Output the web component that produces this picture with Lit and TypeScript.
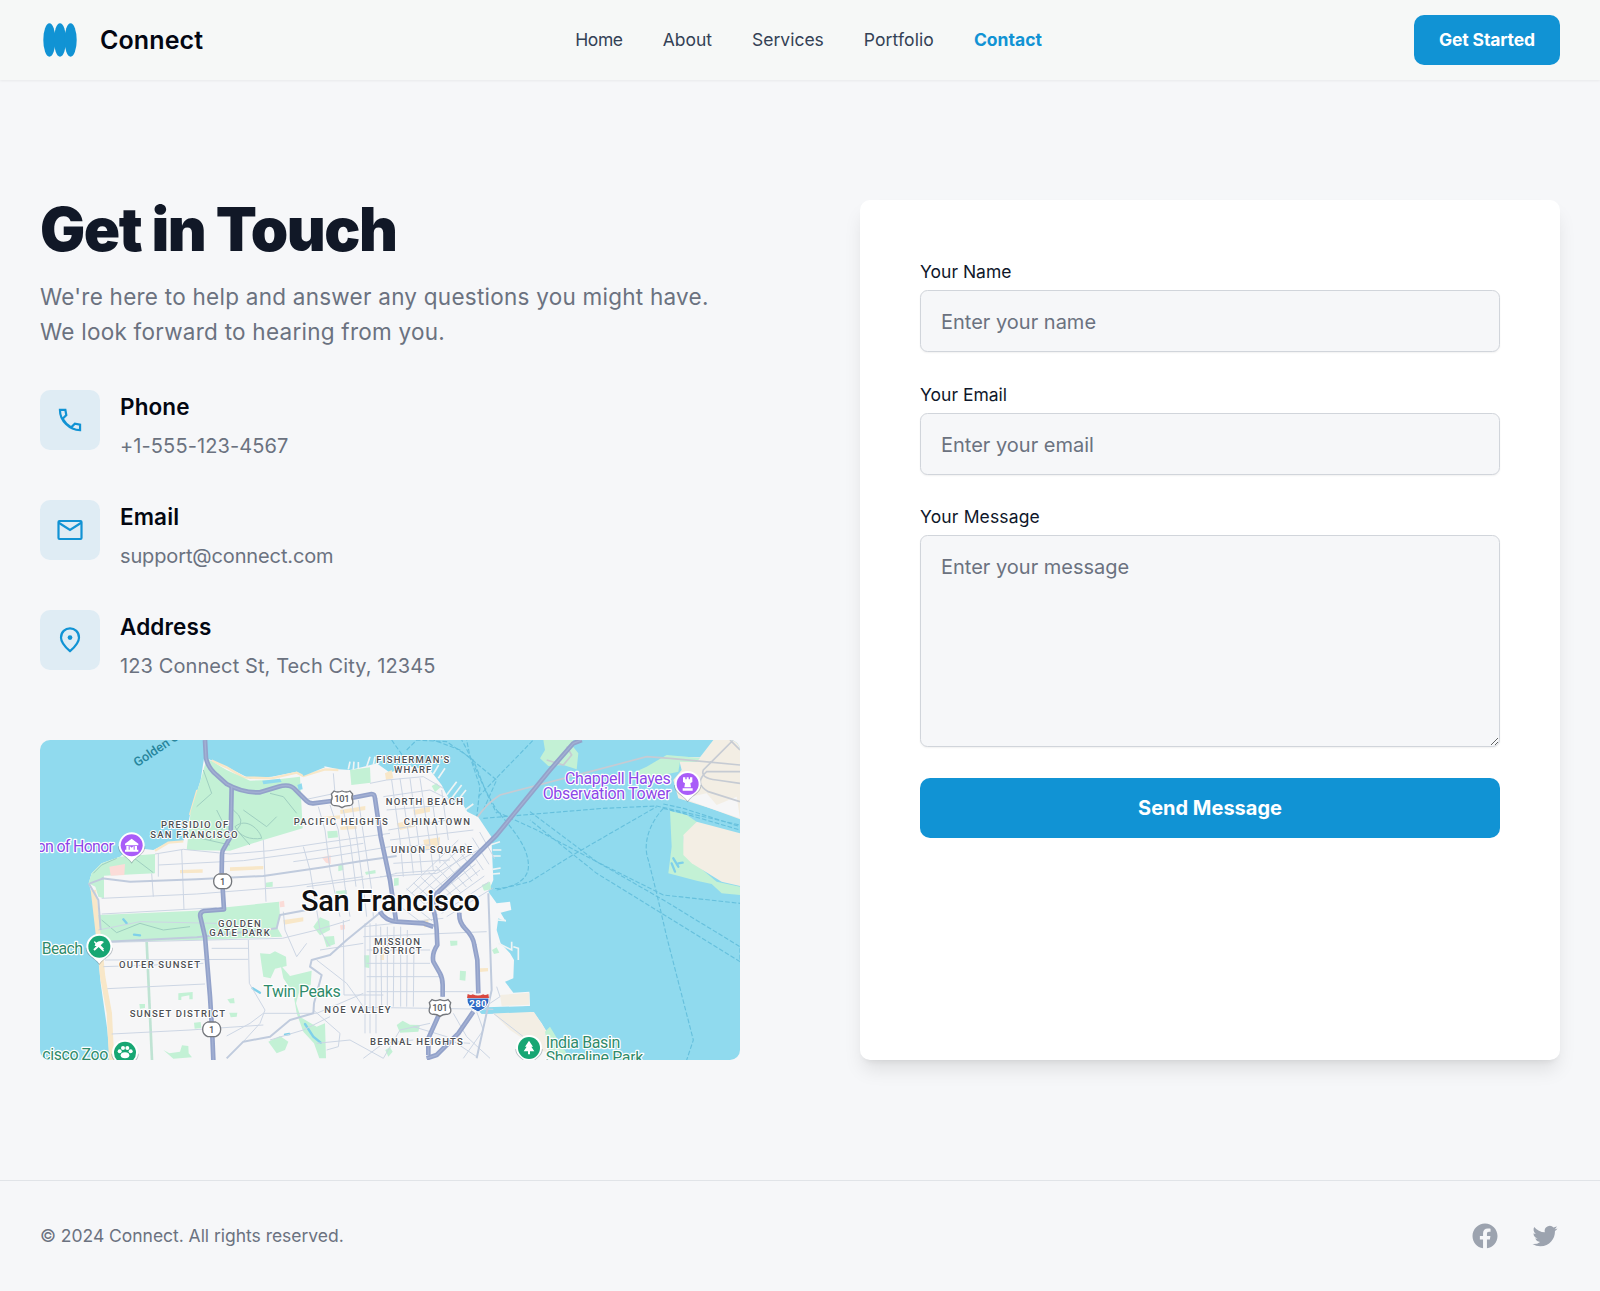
import { LitElement, html, svg, css, unsafeCSS } from "lit";
import { customElement } from "lit/decorators.js";

/* ---------- Map of San Francisco ---------- */

const WATER = unsafeCSS("#90daee");
const LAND = unsafeCSS("#f6f6f7");
const PARK = unsafeCSS("#c3f1d5");
const SAND = unsafeCSS("#f8e7c8");
const URBAN = unsafeCSS("#f3eee4");
const HIGHWAY = unsafeCSS("#93a2ca");

const sfLand =
  "M525 30L530 85L590 110L660 146L725 140L800 125L820 138L880 108L925 118L960 120L1010 108L1040 100L1080 128L1130 108L1200 120L1235 165L1258 210L1300 225L1312 245L1345 262L1384 320L1390 450L1375 485L1400 520L1440 515L1444 540L1412 548L1428 575L1405 565L1400 600L1412 640L1440 670L1452 690L1450 745L1425 755L1450 788L1498 785L1500 828L1370 845L1360 852L1510 846L1535 880L1560 925L1600 990L240 990L232 900L212 760L200 620L188 500L176 460L185 430L215 400L270 380L300 352L370 360L410 340L460 332L470 300L482 245L512 150L522 85Z";

const parks = [
  "M530 85L590 120L660 152L725 150L810 140L818 295L700 330L600 362L470 360L482 245L512 150Z",
  "M185 430L215 400L270 380L375 372V430L222 437L222 505L205 500L196 470L176 460Z",
  "M205 555L500 542L560 535L747 515L750 560L740 590L757 620L500 630L215 636Z",
  "M960 120L1020 112L1022 158L964 165Z",
  "M690 670L720 672L735 664L768 680L770 708L735 716L722 745L700 740L694 700Z",
  "M850 590L870 562L898 574L900 600L870 616Z",
  "M880 620L912 618L915 642L890 652Z",
  "M752 706L780 738L845 722L842 765L810 776L798 820L812 862L860 890L885 880L888 985L868 985L852 940L820 905L800 850L790 790L760 745Z",
  "M715 935L750 918L775 935L765 960L740 970Z",
  "M400 960L418 970L450 965L456 946L475 948L476 970L486 982L430 986Z",
  "M445 790L488 786V808L478 808V796L454 800V810L445 810Z",
  "M592 808L612 804L614 820L600 820Z",
  "M598 848L622 848L620 860L602 862Z",
  "M492 878L512 876L514 894L494 896Z",
  "M328 822L345 822V834L330 836Z",
  "M892 304L922 302L924 322L894 325Z",
  "M925 404L940 402V420L925 424Z",
  "M1005 426L1036 420L1037 430L1008 434Z",
  "M707 458L728 455V470L708 472Z",
  "M1002 676L1018 676V714L1004 712Z",
  "M918 484L950 480V494L920 500Z",
  "M1260 632L1282 632V646L1262 648Z",
  "M1290 722L1308 724L1306 752L1289 750Z",
  "M1100 885L1118 872L1140 884L1170 885L1165 905L1110 908Z",
  "M1066 960L1080 952L1088 965L1075 980Z",
  "M1205 168L1220 160L1232 172L1215 186Z",
  "M1092 445L1106 443V466L1092 468Z",
  "M1355 465L1380 455L1384 478L1362 482Z",
  "M1386 660L1400 652L1408 668L1392 672Z",
  "M1545 905L1560 890L1590 940L1620 985L1560 985Z",
];

const blocks = [
  "M450 420L518 418V428L450 430Z",
  "M600 412L700 408V418L600 423Z",
  "M930 240L1006 228V240L932 252Z",
  "M880 260L930 256V266L880 270Z",
  "M930 290L980 285V297L932 300Z",
  "M1180 330L1230 322L1228 350L1185 360Z",
  "M1100 280L1150 270L1155 290L1110 300Z",
  "M1150 240L1200 230V245L1152 255Z",
  "M1065 130L1085 120L1090 145L1068 150Z",
  "M760 570L820 562V574L762 584Z",
  "M1350 715L1374 714V724L1350 726Z",
  "M1180 570L1195 568V590L1182 592Z",
  "M1050 640L1062 640V690L1052 690Z",
];

const streets = [
  "M215 505L500 492L780 470L1000 440", "M215 552L560 533",
  "M385 405L640 392L840 365L1000 340", "M375 372L460 358L600 372L720 362L900 335L1080 310",
  "M385 440V372", "M365 430L370 500", "M455 360L462 540", "M700 330L708 515",
  "M235 637L757 625L860 600L960 570", "M225 690L655 688", "M220 710L520 700", "M232 776L525 762", "M245 912L480 900L700 885",
  "M590 918L660 880L700 850", "M545 655L655 655", "M655 630L658 760L705 840L690 880L640 935",
  "M760 545L765 600L800 680L830 640", "M820 350L840 420L870 600L900 650", "M865 230L885 300L900 420L930 560",
  "M900 225L925 300L945 470L960 560", "M940 240L960 330L978 470", "M965 215L1000 470L1010 560", "M985 210L1025 480L1030 560",
  "M830 470L1060 440L1100 430", "M790 395L900 380L1080 350L1200 345", "M910 130L915 190L820 210",
  "M1020 160L1070 150L1180 140L1240 175", "M1060 200L1200 180L1270 215", "M1070 240L1250 225", "M1075 300L1300 262", "M1080 330L1330 300",
  "M1085 370L1280 350", "M1090 400L1260 390", "M1095 430L1230 420", "M1050 440L1220 430L1380 340",
  "M1085 150L1110 330L1120 440", "M1110 145L1140 340L1150 430", "M1140 145L1165 330L1175 430", "M1170 145L1200 345L1210 420",
  "M1205 200L1225 340L1230 400", "M1235 180L1255 330",
  "M1000 590L1240 565", "M1000 620L1370 605", "M940 570L942 795L1060 795", "M1005 580V910", "M1020 580V910", "M1038 580V910",
  "M1052 590L1055 830", "M1072 590V830", "M1092 590L1090 830", "M1112 590V830", "M1132 600L1130 830", "M1152 640L1150 830",
  "M1010 660H1200", "M1010 700H1200", "M1010 740H1230", "M1010 785H1330", "M1010 832L1390 838",
  "M860 690L950 760L1000 830", "M870 660L1000 640", "M700 850L860 850L1000 790", "M850 840L930 910L925 950L890 960",
  "M1000 985L1060 940L1150 930", "M1150 890L1250 920L1340 980", "M1270 850L1310 920L1380 985", "M1170 930L1320 940",
  "M1340 845L1360 900L1300 985", "M1390 850L1480 920", "M1060 985L1110 900L1200 880", "M860 940L960 930L1060 985",
  "M1400 770L1410 800L1380 820", "M720 930L820 900L900 860", "M205 600L330 575L560 580",
];

const diagonalStreets = Array.from({ length: 13 }, (_, i) => `M${1085 + i * 22} ${510 - i * 17}L${1190 + i * 17} ${590 - i * 17}`).concat(
  Array.from({ length: 9 }, (_, i) => `M${1130 + i * 15} ${480 + i * 10}L${1285 + i * 13} ${330 + i * 18}`),
);

const arterials = [
  "M215 445L300 455L500 448L700 438L880 412L1000 392L1100 378",
  "M176 460L205 510L212 600", "M180 460L220 445",
  "M215 636L500 622L740 595L750 555L830 540",
  "M590 985L640 935L720 920L780 870L850 850L852 820L875 735L840 710L845 690L900 675L950 630L1060 540",
  "M1375 490L1385 780L1340 985",
];

const highways = [
  "M525 30L528 85Q535 115 560 135L590 162Q640 190 690 187L745 170Q780 160 795 178L830 213Q838 221 850 220L905 213M968 203L1025 192Q1034 192 1035 205L1052 320L1080 450L1098 572M1050 545Q1065 572 1100 575L1180 580L1210 590",
  "M605 170L602 320L582 355Q576 362 576 375L575 430M578 475L582 538L522 543Q508 546 511 560L525 620L540 800L545 880M547 918L550 990",
  "M1655 30L1630 40L1560 120L1400 315L1320 395L1220 490L1208 530Q1217 560 1220 600L1222 645Q1205 670 1210 695L1230 730Q1238 745 1238 765V800M1225 858L1195 925L1195 975",
  "M1288 548Q1286 575 1305 595Q1330 620 1333 645L1342 690L1345 790M1330 845L1285 910L1220 975L1190 985",
];

const ferries = [
  "M1375 475C1440 480 1490 455 1495 415C1500 350 1440 290 1400 240C1350 160 1330 90 1295 30",
  "M1360 265L1720 235L1880 228L2130 285", "M1400 245L1520 300L1700 395L1900 510L2130 650L2130 695L1700 430L1500 270",
  "M1400 480L1500 455L1620 380L1880 230", "M1900 235C1850 290 1840 350 1855 390L1880 490L1910 620L1990 930L1970 990",
  "M1500 245L1700 395L1900 495L2130 520", "M1340 265L1350 170L1320 80L1310 30", "M1345 200L1510 30", "M1360 240L1400 150L1290 60L1210 30",
  "M1130 60L1160 30L1250 35L1330 90L1370 190L1400 250", "M1085 30L1120 80",
];

type MapLabel = { t: string; x: number; y: number; w: number };

const districts: MapLabel[] = [
  { t: "PRESIDIO OF", x: 393, y: 294, w: 202 },
  { t: "SAN FRANCISCO", x: 361, y: 324, w: 262 },
  { t: "PACIFIC HEIGHTS", x: 791, y: 286, w: 282 },
  { t: "FISHERMAN'S", x: 1039, y: 99, w: 219 },
  { t: "WHARF", x: 1092, y: 129, w: 112 },
  { t: "NORTH BEACH", x: 1067, y: 224, w: 232 },
  { t: "CHINATOWN", x: 1121, y: 285, w: 199 },
  { t: "UNION SQUARE", x: 1083, y: 368, w: 243 },
  { t: "GOLDEN", x: 564, y: 590, w: 128 },
  { t: "GATE PARK", x: 538, y: 619, w: 181 },
  { t: "OUTER SUNSET", x: 267, y: 713, w: 243 },
  { t: "SUNSET DISTRICT", x: 299, y: 862, w: 286 },
  { t: "MISSION", x: 1033, y: 644, w: 137 },
  { t: "DISTRICT", x: 1028, y: 673, w: 147 },
  { t: "NOE VALLEY", x: 883, y: 850, w: 199 },
  { t: "BERNAL HEIGHTS", x: 1020, y: 944, w: 278 },
];

const paths = (list: string[], cls: string) => list.map((d) => svg`<path class=${cls} d=${d}></path>`);

const pin = (x: number, y: number, tone: string, glyph: unknown) => svg`
  <g transform="translate(${x} ${y})">
    <path class="pin-shadow" d="M-41 3C-41 28 -15 32 0 55C15 32 41 28 41 3Z"></path>
    <path class="pin-body" d="M0 -39A39 39 0 0 1 39 0C39 26 14 32 0 51C-14 32 -39 26 -39 0A39 39 0 0 1 0 -39Z"></path>
    <circle class=${tone} r="33"></circle>
    ${glyph}
  </g>`;

const usShield = (x: number, y: number) => svg`
  <g transform="translate(${x} ${y})">
    <path class="shield" d="M-24 -24Q-14 -18 0 -24Q14 -18 24 -24L32 -15Q27 -4 32 4Q35 18 22 20Q10 19 0 26Q-10 19 -22 20Q-35 18 -32 4Q-27 -4 -32 -15Z"></path>
    <text class="shield-num" x="0" y="10" textLength="46">101</text>
  </g>`;

const stateShield = (x: number, y: number) => svg`
  <g transform="translate(${x} ${y})">
    <path class="shield" d="M-12 -22H12Q27 -16 27 0Q27 16 12 22H-12Q-27 16 -27 0Q-27 -16 -12 -22Z"></path>
    <text class="shield-num" x="0" y="10">1</text>
  </g>`;

@customElement("city-map")
export class CityMap extends LitElement {
  static styles = css`
    :host { display: block; height: 320px; border-radius: 10px; overflow: hidden; background: ${WATER}; }
    svg { display: block; width: 100%; height: 100%; }
    path { fill: none; }
    .land { fill: ${LAND}; }
    .park { fill: ${PARK}; }
    .sand { fill: ${SAND}; }
    .urban { fill: ${URBAN}; }
    .blush { fill: #fbdcd8; }
    .water { fill: ${WATER}; }
    .beach { stroke: ${SAND}; stroke-width: 16; }
    .coast { stroke: ${SAND}; stroke-width: 7; }
    .pier { stroke: #eef4f4; stroke-width: 5; }
    .street { stroke: #cdd6e4; stroke-width: 3; }
    .trail { stroke: #9fcfc0; stroke-width: 3; }
    .greenway { stroke: #bfe3d3; stroke-width: 8; }
    .arterial { stroke: #c0cbdd; stroke-width: 6; stroke-linejoin: round; }
    .highway { stroke: ${HIGHWAY}; stroke-width: 14; stroke-linejoin: round; }
    .highway-core { stroke: #a3b0d3; stroke-width: 4; stroke-linejoin: round; }
    .ferry { stroke: #66c0dd; stroke-width: 3.4; stroke-dasharray: 14 6; }
    .ramp { stroke: #c6cbd3; stroke-width: 5; }
    .brook { stroke: #7fd0ea; stroke-width: 7; stroke-linecap: round; }
    text { font-family: Roboto, "Liberation Sans", sans-serif; paint-order: stroke; stroke-linejoin: round; }
    .district { font-size: 28.5px; font-weight: 500; fill: #4d4f53; stroke: #fff; stroke-width: 6px; }
    .city { font-size: 87px; font-weight: 500; fill: #101113; stroke: #fff; stroke-width: 8px; }
    .poi { font-size: 48px; stroke: #fff; stroke-width: 7px; }
    .green { fill: #2f8b6b; }
    .violet { fill: #8c47e8; }
    .strait { font-size: 38px; font-weight: 500; fill: #27859c; }
    .shield { fill: #fff; stroke: #74777c; stroke-width: 4; }
    .shield-num { font-size: 28px; font-weight: 500; fill: #55585c; text-anchor: middle; }
    .interstate { fill: #2e69c4; stroke: #fff; stroke-width: 3; }
    .interstate-top { fill: #d9483f; }
    .interstate-num { font-size: 29px; font-weight: 700; fill: #fff; text-anchor: middle; }
    .pin-shadow { fill: #5d6b78; opacity: 0.4; }
    .pin-body { fill: #fff; }
    .pin-violet { fill: #a95cf8; }
    .pin-green { fill: #17a673; }
    .glyph-line { stroke: #fff; stroke-width: 4; stroke-linecap: round; }
    .glyph { fill: #fff; }
  `;

  render() {
    return html`<svg viewBox="30 30 2100 960" preserveAspectRatio="none" role="img" aria-label="Map of San Francisco">
      ${paths(ferries, "ferry")}
      <path class="park" d="M1540 30L1545 60L1530 85L1555 108L1600 105L1640 118L1645 70L1625 45L1630 30Z"></path>
      <path class="ramp" d="M1550 90L1600 105L1625 75L1610 50"></path>
      <path class="urban" d="M2050 30L2010 82L1945 80L1955 120L1930 150L1945 205L2040 235L2130 268V30Z"></path>
      <path class="land" d="M1960 205L2030 190L2060 225L2120 200L2130 265L2040 235Z"></path>
      <path class="park" d="M1910 75L2010 84L2000 96L1950 95L1945 125L1900 135L1870 160L1825 150L1810 128L1850 110Z"></path>
      <path class="park" d="M1920 243L1970 255L2000 275L1960 320L1965 375L2060 455L2130 470V495L2075 490L2045 462L2000 452L1915 430L1925 350Z"></path>
      <path class="urban" d="M2000 275L2130 310V468L2075 455L1985 400L1960 375V315Z"></path>
      <path class="brook" d="M1930 385L1945 410M1925 400L1935 425M1945 400L1958 398"></path>
      <path class="ramp" d="M1340 265Q1370 220 1410 195L1680 125L1850 80L1920 85L2130 105M2130 125H2030Q1990 160 2035 185L2130 215M2130 60L2100 30M2130 160L2060 150Q2010 145 2020 120L2110 30"></path>
      <path class="ferry" d="M1900 222L1960 235L2130 290M1900 235L1960 250L2130 300"></path>

      <path class="land" d=${sfLand}></path>
      <path class="beach" d="M190 480L206 620L218 740L238 850L245 990"></path>
      <path class="coast" d="M545 92L590 112L640 142L725 145L800 128L820 138L885 118L925 120"></path>
      <path class="coast" d="M480 255L502 180M375 362L415 338L460 334"></path>
      <path class="urban" d="M1385 845L1512 846L1555 912L1600 985L1530 960L1440 900Z"></path>
      <path class="urban" d="M1410 795L1498 788V824L1415 828Z"></path>
      ${paths(parks, "park")} ${paths(blocks, "sand")}
      <path class="blush" d="M238 410L285 402L283 435L242 437ZM875 382L902 376L902 402L888 398ZM748 515L762 512L764 530L750 532ZM930 586L945 584V598L932 600Z"></path>
      <path class="pier" d="M1195 120L1210 95M1210 132L1226 105M1225 145L1245 115M1250 195L1280 155M1265 205L1295 165M1280 215L1308 180M1305 240L1330 222M1380 345L1410 335M1388 360L1414 360M1388 378L1412 378M1388 418L1412 414M1388 432L1410 430M1400 570L1428 572M1405 640L1445 660V635M1450 650L1465 655V690M1010 110L1020 80M1030 105L1035 80M955 118L960 95M970 118L972 95M985 116L985 96"></path>
      <path class="water" d="M1345 842L1370 832L1500 828V846L1355 852ZM815 125L880 105L885 112L820 138ZM697 152L750 146L755 156L700 163ZM802 165L815 160L818 178L806 180Z"></path>
      <path class="brook" d="M668 775L690 788M825 882L850 920L872 938M765 914L778 912M312 614L330 616M280 568L290 580"></path>
      <path class="trail" d="M520 120L545 190L500 230M560 240L585 290L540 330M610 240Q650 270 620 300L660 345M640 240L710 290L740 260M720 190L760 200L800 250M615 290C650 260 690 300 695 325C660 330 630 320 615 290M490 320L600 345M190 430L215 405L260 385M215 570L260 608L330 580L400 600L480 590M300 375L370 428"></path>
      <path class="greenway" d="M350 635L366 990"></path>
      ${paths(streets, "street")} ${paths(diagonalStreets, "street")}
      ${paths(arterials, "arterial")} ${paths(highways, "highway")} ${paths(highways, "highway-core")}

      ${usShield(936, 207)} ${usShield(1230, 833)} ${stateShield(578, 454)} ${stateShield(545, 898)}
      <g transform="translate(1344 818)">
        <path class="interstate" d="M-33 -14H33Q37 12 0 28Q-37 12 -33 -14Z"></path>
        <path class="interstate-top" d="M-31 -26Q-20 -20 -16 -25Q0 -18 16 -25Q20 -20 31 -26L33 -14H-33Z"></path>
        <text class="interstate-num" x="0" y="13" textLength="52">280</text>
      </g>

      ${pin(305, 346, "pin-violet", svg`<path class="glyph" d="M-20 -5L0 -20L20 -5V0H-20ZM-16 2H-9V13H-16ZM9 2H16V13H9ZM-20 13H20V19H-20ZM-6 2L0 7L6 2V13H-6Z"></path>`)}
      ${pin(1973, 162, "pin-violet", svg`<path class="glyph" d="M-14 -20H-7V-14H-3V-20H3V-14H7V-20H14V-6L8 -2L10 10H-10L-8 -2L-14 -6ZM-15 13H15V20H-15Z"></path>`)}
      ${pin(208, 650, "pin-green", svg`<path class="glyph" d="M-14 -2A18 18 0 0 1 14 -14L4 -4L14 6L10 10L-1 0L-14 12L-18 8L-8 -2Z"></path><path class="glyph-line" d="M-14 -14L12 12"></path>`)}
      ${pin(285, 968, "pin-green", svg`<g class="glyph"><circle cx="-16" cy="-4" r="6"></circle><circle cx="-6" cy="-14" r="6"></circle><circle cx="7" cy="-14" r="6"></circle><circle cx="17" cy="-4" r="6"></circle><ellipse cx="0" cy="8" rx="13" ry="9"></ellipse></g>`)}
      ${pin(1497, 954, "pin-green", svg`<path class="glyph" d="M0 -22L12 -4H7L16 10H3V19H-3V10H-16L-7 -4H-12Z"></path>`)}

      ${districts.map((l) => svg`<text class="district" x=${l.x} y=${l.y} textLength=${l.w}>${l.t}</text>`)}
      <text class="city" x="813" y="542" textLength="537">San Francisco</text>
      <text class="poi violet" x="20" y="367" textLength="232">on of Honor</text>
      <text class="poi violet" x="1605" y="162" textLength="317">Chappell Hayes</text>
      <text class="poi violet" x="1538" y="207" textLength="384">Observation Tower</text>
      <text class="poi green" x="35" y="671" textLength="124">Beach</text>
      <text class="poi green" x="700" y="802" textLength="232">Twin Peaks</text>
      <text class="poi green" x="37" y="990" textLength="198">cisco Zoo</text>
      <text class="poi green" x="1547" y="954" textLength="224">India Basin</text>
      <text class="poi green" x="1547" y="999" textLength="293">Shoreline Park</text>
      <text class="strait" transform="translate(322 112) rotate(-34)">Golden Gate</text>
    </svg>`;
  }
}

/* ---------- Page ---------- */

const icons = {
  phone: svg`<path d="M3.95 3.95H8.3L9.05 8.1L6.1 11.05Q8.6 15.4 12.95 17.9L15.9 14.95L20.05 15.7V20.05C11.5 20.05 3.95 12.5 3.95 3.95Z"></path>`,
  mail: svg`<rect x="2.8" y="4.8" width="18.4" height="14.4" rx="0.8"></rect><path d="M3 6.2L12 12L21 6.2"></path>`,
  place: svg`<path d="M12 20.9C7.2 16.7 4.8 13.2 4.8 10.1C4.8 5.6 8.2 2.7 12 2.7S19.2 5.6 19.2 10.1C19.2 13.2 16.8 16.7 12 20.9Z"></path><circle class="dot" cx="12" cy="10" r="1.9"></circle>`,
};

const contacts = [
  { icon: icons.phone, title: "Phone", value: "+1-555-123-4567", cls: "value" },
  { icon: icons.mail, title: "Email", value: "support@connect.com", cls: "value snug" },
  { icon: icons.place, title: "Address", value: "123 Connect St, Tech City, 12345", cls: "value" },
];

const links = [
  { label: "Home", cls: "snug" },
  { label: "About", cls: "" },
  { label: "Services", cls: "" },
  { label: "Portfolio", cls: "wide" },
  { label: "Contact", cls: "active" },
];

@customElement("app-root")
export class AppRoot extends LitElement {
  static styles = css`
    * { box-sizing: border-box; margin: 0; }
    :host {
      display: flex; flex-direction: column; min-height: 1291px;
      background: #f6f7f9; color: #030712;
      font-family: Inter, "Liberation Sans", sans-serif; font-size: 20px; line-height: 30px;
    }
    header {
      display: flex; align-items: center; justify-content: space-between;
      height: 80px; padding: 0 40px; background: #f6f8f7;
      box-shadow: 0 1px 2.5px rgba(0, 0, 0, 0.06);
    }
    .brand { display: flex; align-items: center; gap: 20px; font-size: 25px; font-weight: 600; letter-spacing: 0.1px; }
    .logo { width: 40px; height: 40px; fill: #1193d4; }
    nav { display: flex; gap: 40px; padding-bottom: 1px; }
    nav a { font-size: 17.5px; line-height: 25px; color: #334155; text-decoration: none; }
    nav a.snug { letter-spacing: -0.4px; }
    nav a.wide { letter-spacing: 0.1px; }
    nav a.active { color: #1193d4; font-weight: 700; }
    button { border: 0; background: #1193d4; color: #fff; font: inherit; font-weight: 700; border-radius: 10px; }
    .cta { height: 50px; width: 146px; padding: 0; font-size: 17.5px; letter-spacing: -0.15px; }
    main { display: grid; grid-template-columns: 1fr 1fr; gap: 120px; padding: 120px 40px; height: 1100px; }
    .intro { display: flex; flex-direction: column; }
    h1 { font-size: 60px; line-height: 58px; font-weight: 900; letter-spacing: -1.5px; color: #111827; }
    .lead { margin-top: 21px; font-size: 22.5px; line-height: 35px; letter-spacing: 0.25px; color: #6b7280; }
    .contacts { display: flex; flex-direction: column; gap: 40px; margin-top: 41px; }
    .contact { display: flex; gap: 20px; height: 70px; }
    .badge { display: grid; place-items: center; width: 60px; height: 60px; border-radius: 10px; background: #dfecf4; }
    .badge svg { width: 30px; height: 30px; fill: none; stroke: #1193d4; stroke-width: 1.75; }
    .badge .dot { fill: #1193d4; stroke: none; }
    h3 { font-size: 22.5px; line-height: 33px; font-weight: 600; letter-spacing: 0.12px; }
    .value { margin-top: 7.5px; letter-spacing: 0.1px; color: #6b7280; }
    .value.snug { letter-spacing: -0.13px; }
    city-map { margin-top: auto; }
    .card {
      display: flex; flex-direction: column; padding: 60px; background: #fff; border-radius: 10px;
      box-shadow: 0 12.5px 18.75px -3.75px rgba(0, 0, 0, 0.1), 0 5px 7.5px -5px rgba(0, 0, 0, 0.1);
    }
    .field { display: flex; flex-direction: column; margin-bottom: 30.5px; }
    label { font-size: 17.5px; line-height: 24px; color: #0f172a; margin-bottom: 6px; }
    label.wide { letter-spacing: 0.15px; }
    input, textarea {
      display: block; width: 100%; padding: 16px 20px 14px; border: 1px solid #d1d5db; border-radius: 7.5px;
      background: #f6f7f9; font: inherit; outline: none; box-shadow: 0 1px 2px rgba(0, 0, 0, 0.06);
    }
    input { height: 62px; }
    textarea { height: 212px; resize: both; }
    ::placeholder { color: #6b7280; opacity: 1; }
    .send { height: 60px; font-size: 20px; }
    footer {
      display: flex; align-items: center; justify-content: space-between;
      height: 111px; padding: 0 40px; border-top: 1px solid #e1e4e8; font-size: 17.5px; letter-spacing: -0.03px; color: #6b7280;
    }
    .social { display: flex; gap: 30px; }
    .social svg { display: block; width: 30px; height: 30px; fill: #9ca3af; }
  `;

  render() {
    return html`
      <header>
        <div class="brand">
          <svg class="logo" viewBox="0 0 40 40">
            <ellipse cx="9.4" cy="20" rx="6.1" ry="16.7"></ellipse>
            <ellipse cx="20" cy="20" rx="6.1" ry="16.7"></ellipse>
            <ellipse cx="30.6" cy="20" rx="6.1" ry="16.7"></ellipse>
          </svg>
          <span>Connect</span>
        </div>
        <nav>${links.map((l) => html`<a href="#" class=${l.cls}>${l.label}</a>`)}</nav>
        <button class="cta">Get Started</button>
      </header>
      <main>
        <section class="intro">
          <h1>Get in Touch</h1>
          <p class="lead">We're here to help and answer any questions you might have.<br />We look forward to hearing from you.</p>
          <div class="contacts">
            ${contacts.map(
              (c) => html`<div class="contact">
                <div class="badge"><svg viewBox="0 0 24 24">${c.icon}</svg></div>
                <div><h3>${c.title}</h3><p class=${c.cls}>${c.value}</p></div>
              </div>`,
            )}
          </div>
          <city-map></city-map>
        </section>
        <form class="card" @submit=${(e: Event) => e.preventDefault()}>
          <div class="field"><label for="name">Your Name</label><input id="name" placeholder="Enter your name" /></div>
          <div class="field"><label for="email">Your Email</label><input id="email" type="email" placeholder="Enter your email" /></div>
          <div class="field"><label class="wide" for="message">Your Message</label><textarea id="message" placeholder="Enter your message"></textarea></div>
          <button class="send">Send Message</button>
        </form>
      </main>
      <footer>
        <p>© 2024 Connect. All rights reserved.</p>
        <div class="social">
          <svg viewBox="0 0 24 24"><path d="M22 12c0-5.523-4.477-10-10-10S2 6.477 2 12c0 4.991 3.657 9.128 8.438 9.878v-6.987h-2.54V12h2.54V9.797c0-2.506 1.492-3.89 3.777-3.89 1.094 0 2.238.195 2.238.195v2.46h-1.26c-1.243 0-1.63.771-1.63 1.562V12h2.773l-.443 2.89h-2.33v6.988C18.343 21.128 22 16.991 22 12z"></path></svg>
          <svg viewBox="0 0 24 24"><path d="M8.29 20.251c7.547 0 11.675-6.253 11.675-11.675 0-.178 0-.355-.012-.53A8.348 8.348 0 0022 5.92a8.19 8.19 0 01-2.357.646 4.118 4.118 0 001.804-2.27 8.224 8.224 0 01-2.605.996 4.107 4.107 0 00-6.993 3.743 11.65 11.65 0 01-8.457-4.287 4.106 4.106 0 001.27 5.477A4.072 4.072 0 012.8 9.713v.052a4.105 4.105 0 003.292 4.022 4.095 4.095 0 01-1.853.07 4.108 4.108 0 003.834 2.85A8.233 8.233 0 012 18.407a11.616 11.616 0 006.29 1.84"></path></svg>
        </div>
      </footer>
    `;
  }
}
